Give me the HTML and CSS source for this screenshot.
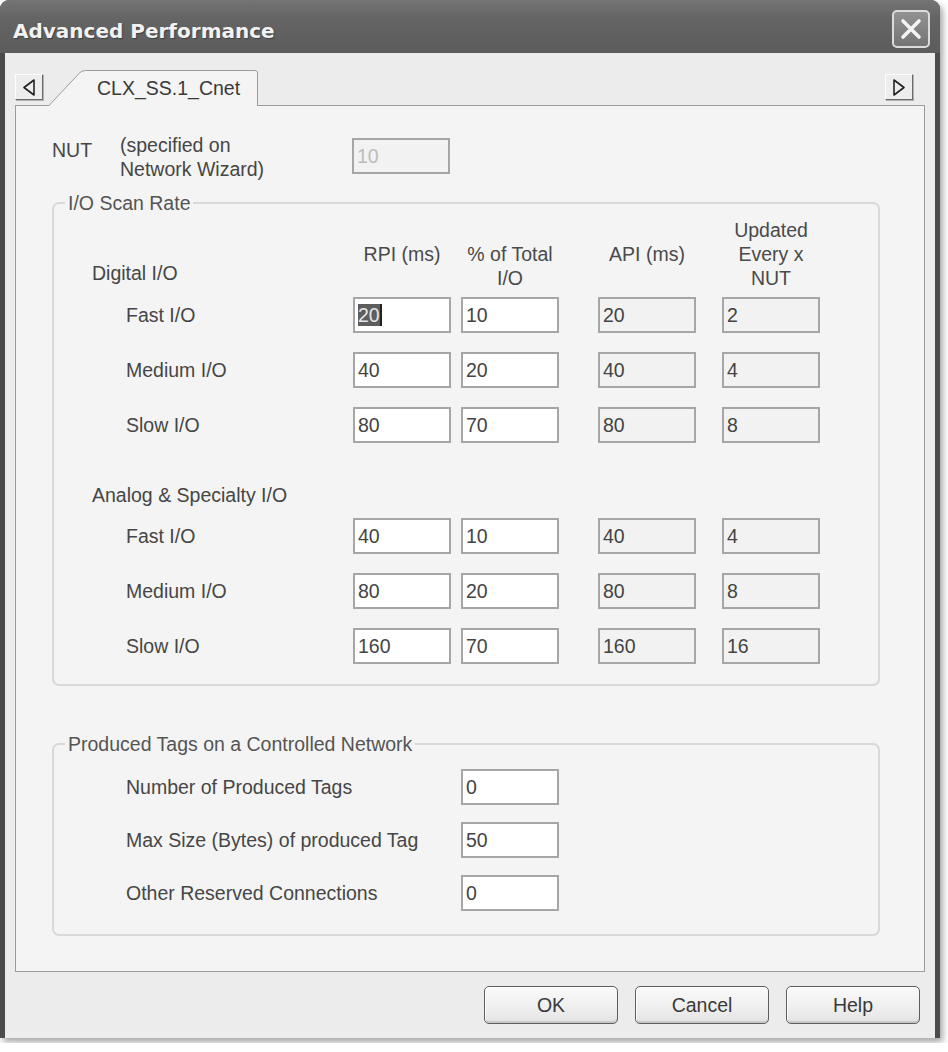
FILE: index.html
```html
<!DOCTYPE html>
<html lang="en">
<head>
    <meta charset="UTF-8">
    <meta name="viewport" content="width=device-width, initial-scale=1.0">
    <title>Advanced Performance</title>
    <link rel="stylesheet" href="styles.css">
</head>
<body>
    <div class="window">
        <div class="titlebar">
            <span class="title">Advanced Performance</span>
            <span class="close-btn">
                <svg width="34" height="34" viewBox="0 0 34 34">
                    <path d="M9 9 L25 25 M25 9 L9 25" stroke="#f4f4f4" stroke-width="3.6" stroke-linecap="round"/>
                </svg>
            </span>
        </div>

        <div class="client">
            <div class="tabstrip">
                <span class="scroll-btn">
                    <svg width="26" height="24" viewBox="0 0 26 24">
                        <path d="M18 5 L8 12.5 L18 20 Z" fill="none" stroke="#222" stroke-width="1.6" stroke-linejoin="round"/>
                    </svg>
                </span>
                <div class="tab">
                    <svg class="tab-shape" width="210" height="36" viewBox="0 0 210 36">
                        <path d="M0.5 36 L31 3.5 Q33.5 0.5 37.5 0.5 L207 0.5 Q209.5 0.5 209.5 3 L209.5 36 Z" fill="#f4f4f4"/>
                        <path d="M0.5 36 L31 3.5 Q33.5 0.5 37.5 0.5 L207 0.5 Q209.5 0.5 209.5 3 L209.5 36" fill="none" stroke="#9c9c9c" stroke-width="1"/>
                    </svg>
                    <span class="tab-text">CLX_SS.1_Cnet</span>
                </div>
                <span class="scroll-btn right">
                    <svg width="26" height="24" viewBox="0 0 26 24">
                        <path d="M8 5 L18 12.5 L8 20 Z" fill="none" stroke="#222" stroke-width="1.6" stroke-linejoin="round"/>
                    </svg>
                </span>
            </div>

            <div class="panel">
                <div class="nut-row">
                    <span class="nut-label">NUT</span>
                    <span class="nut-note">(specified on<br>Network Wizard)</span>
                    <span class="field off">10</span>
                </div>

                <fieldset class="group scan">
                    <legend>I/O Scan Rate</legend>
                    <div class="io-head">
                        <span class="io-section">Digital I/O</span>
                        <span class="col-head">RPI (ms)</span>
                        <span class="col-head low">% of Total<br>I/O</span>
                        <span class="col-head">API (ms)</span>
                        <span class="col-head">Updated<br>Every x<br>NUT</span>
                    </div>
                    <div class="io-row first">
                        <span class="io-label">Fast I/O</span>
                        <span class="field"><span class="sel">20</span></span>
                        <span class="field">10</span>
                        <span class="field ro">20</span>
                        <span class="field ro">2</span>
                    </div>
                    <div class="io-row">
                        <span class="io-label">Medium I/O</span>
                        <span class="field">40</span>
                        <span class="field">20</span>
                        <span class="field ro">40</span>
                        <span class="field ro">4</span>
                    </div>
                    <div class="io-row">
                        <span class="io-label">Slow I/O</span>
                        <span class="field">80</span>
                        <span class="field">70</span>
                        <span class="field ro">80</span>
                        <span class="field ro">8</span>
                    </div>

                    <div class="io-section analog">Analog &amp; Specialty I/O</div>
                    <div class="io-row first">
                        <span class="io-label">Fast I/O</span>
                        <span class="field">40</span>
                        <span class="field">10</span>
                        <span class="field ro">40</span>
                        <span class="field ro">4</span>
                    </div>
                    <div class="io-row">
                        <span class="io-label">Medium I/O</span>
                        <span class="field">80</span>
                        <span class="field">20</span>
                        <span class="field ro">80</span>
                        <span class="field ro">8</span>
                    </div>
                    <div class="io-row">
                        <span class="io-label">Slow I/O</span>
                        <span class="field">160</span>
                        <span class="field">70</span>
                        <span class="field ro">160</span>
                        <span class="field ro">16</span>
                    </div>
                </fieldset>

                <fieldset class="group tags">
                    <legend>Produced Tags on a Controlled Network</legend>
                    <div class="tag-row">
                        <span class="io-label">Number of Produced Tags</span>
                        <span class="field">0</span>
                    </div>
                    <div class="tag-row">
                        <span class="io-label">Max Size (Bytes) of produced Tag</span>
                        <span class="field">50</span>
                    </div>
                    <div class="tag-row">
                        <span class="io-label">Other Reserved Connections</span>
                        <span class="field">0</span>
                    </div>
                </fieldset>
            </div>

            <div class="buttons">
                <button class="btn">OK</button>
                <button class="btn">Cancel</button>
                <button class="btn">Help</button>
            </div>
        </div>
    </div>
</body>
</html>
```

FILE: styles.css
```css
body {
    margin: 0;
    background: #fff;
    font-family: "Liberation Sans", Arial, sans-serif;
    font-size: 19.5px;
    color: #464646;
}

.window {
    width: 940px;
    background: #4b4b4b;
    border-radius: 9px 9px 0 0;
    box-shadow: 3px 4px 6px rgba(0, 0, 0, 0.35);
}

/* title bar */
.titlebar {
    height: 53px;
    display: flex;
    align-items: center;
    padding: 0 10px 0 13px;
    box-sizing: border-box;
    border-radius: 9px 9px 0 0;
    background: linear-gradient(#747474, #646464 35%, #5c5c5c);
}

.title {
    margin-top: 9px;
    font-family: "DejaVu Sans", sans-serif;
    font-weight: bold;
    font-size: 20px;
    color: #f2f2f2;
    text-shadow: 1px 1px 1px #3e3e3e;
}

.close-btn {
    margin-left: auto;
    margin-top: 5px;
    width: 38px;
    height: 38px;
    box-sizing: border-box;
    border: 2px solid #dcdcdc;
    border-radius: 5px;
    background: linear-gradient(#929292, #747474);
    display: flex;
    align-items: center;
    justify-content: center;
}

/* client area */
.client {
    margin: 0 5px 5px;
    padding: 17px 10px 0;
    background: #ececec;
}

.tabstrip {
    height: 35px;
    display: flex;
    align-items: flex-start;
}

.scroll-btn {
    margin-top: 4px;
    width: 28px;
    height: 26px;
    box-sizing: border-box;
    background: #ededed;
    border: 1px solid;
    border-color: #fdfdfd #6c6c6c #6c6c6c #fdfdfd;
    box-shadow: 1px 1px 0 #b0b0b0;
    display: flex;
    align-items: center;
    justify-content: center;
}

.scroll-btn.right {
    margin-left: auto;
    margin-right: 12px;
}

.tab {
    position: relative;
    z-index: 1;
    margin-left: 5px;
    margin-bottom: -1px;
    width: 210px;
    height: 36px;
}

.tab-shape {
    position: absolute;
    left: 0;
    top: 0;
}

.tab-text {
    position: relative;
    display: block;
    padding-left: 49px;
    line-height: 36px;
    color: #3a3a3a;
}

.panel {
    position: relative;
    background: #f4f4f4;
    border: 1px solid #9c9c9c;
    padding: 27px 44px 35px 36px;
}

/* NUT line */
.nut-row {
    display: flex;
    align-items: flex-start;
    line-height: 24px;
}

.nut-label {
    width: 68px;
    margin-top: 5px;
}

.nut-note {
    width: 232px;
}

.nut-row .field {
    margin-top: 5px;
}

/* group boxes */
.group {
    margin: 11px 0 0;
    padding: 4px 0 20px;
    border: 2px solid #d8d8d8;
    border-radius: 7px;
    min-width: 0;
}

.group legend {
    margin-left: 11px;
    padding: 0 3px;
    line-height: 22px;
    color: #555;
}

.group.tags {
    margin-top: 47px;
    padding: 14px 0 23px;
}

.io-head,
.io-row {
    display: grid;
    grid-template-columns: 299px 108px 137px 124px 98px;
    align-items: center;
}

.io-head {
    height: 72px;
    line-height: 24px;
}

.col-head {
    width: 98px;
    text-align: center;
    color: #4a4a4a;
}

.col-head.low {
    align-self: end;
}

.io-section {
    padding-left: 38px;
    line-height: 24px;
}

.io-head .io-section {
    align-self: end;
    margin-bottom: 5px;
}

.io-section.analog {
    margin-top: 40px;
}

.io-row {
    margin-top: 19px;
}

.io-row.first {
    margin-top: 7px;
}

.io-section.analog + .io-row.first {
    margin-top: 11px;
}

.io-label {
    padding-left: 72px;
}

.tag-row {
    display: grid;
    grid-template-columns: 407px 98px;
    align-items: center;
    margin-top: 17px;
}

.tag-row:first-of-type {
    margin-top: 0;
}

/* edit boxes */
.field {
    display: block;
    width: 98px;
    height: 36px;
    box-sizing: border-box;
    border: 2px solid #a6a6a6;
    background: #fff;
    padding-left: 3px;
    line-height: 32px;
    color: #444;
}

.field.ro {
    background: #f2f2f2;
}

.field.off {
    background: #f2f2f2;
    color: #bcbcbc;
}

.sel {
    background: #5e5e5e;
    color: #e6e6e6;
    border-right: 2px solid #222;
}

/* dialog buttons */
.buttons {
    display: flex;
    justify-content: flex-end;
    gap: 17px;
    padding: 14px 5px 14px 0;
}

.btn {
    width: 134px;
    height: 38px;
    font-family: inherit;
    font-size: 19.5px;
    color: #3a3a3a;
    background: linear-gradient(#fafafa, #ececec 70%, #e2e2e2);
    border: 1px solid #5e5e5e;
    border-radius: 5px;
    box-shadow: inset 1px 1px 0 #fff, inset 0 -2px 0 #c9c9c9;
}
```
